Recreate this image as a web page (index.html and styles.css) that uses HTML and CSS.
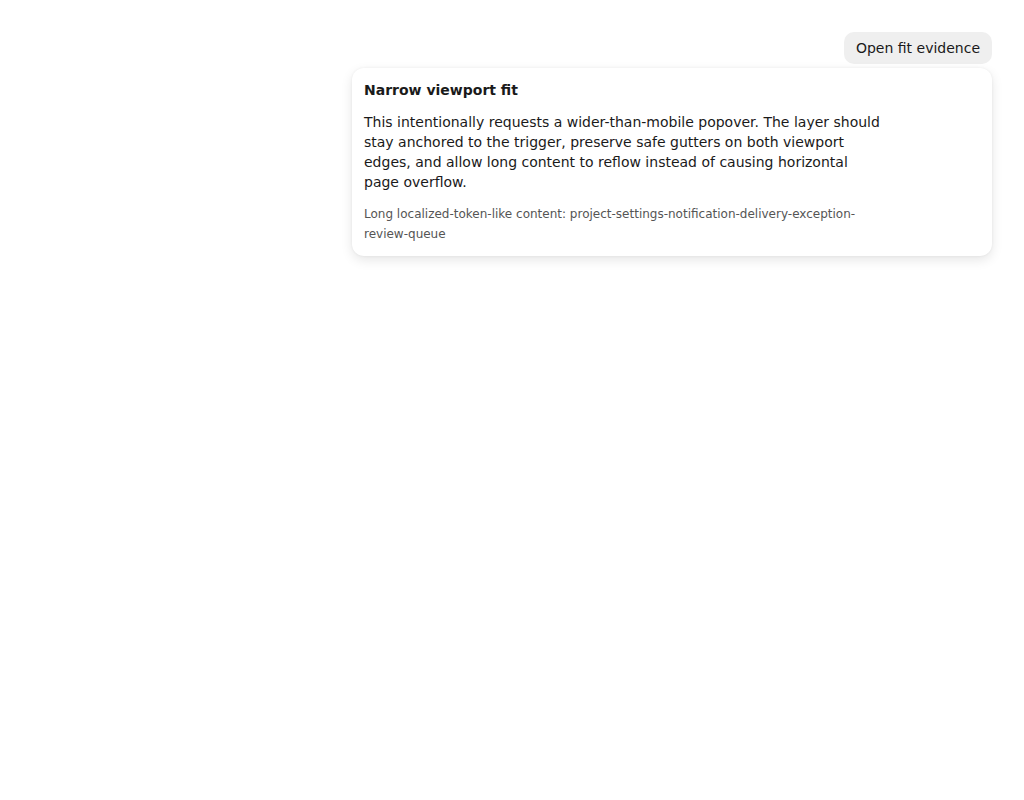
FILE: index.html
```html
<!DOCTYPE html>
<html lang="en">
<head>
<meta charset="utf-8">
<title>Narrow viewport fit</title>
<link rel="stylesheet" href="styles.css">
</head>
<body>
<div class="page">
  <button class="trigger" type="button">Open fit evidence</button>
  <div class="popover" role="dialog">
    <div class="content">
      <h2 class="title">Narrow viewport fit</h2>
      <p class="body">This intentionally requests a wider-than-mobile popover. The layer should stay anchored to the trigger, preserve safe gutters on both viewport edges, and allow long content to reflow instead of causing horizontal page overflow.</p>
      <p class="note">Long localized-token-like content: project-settings-notification-delivery-exception-review-queue</p>
    </div>
  </div>
</div>
</body>
</html>
```
FILE: styles.css
```css
html, body {
  margin: 0;
  padding: 0;
  background: #ffffff;
}
body {
  font-family: "DejaVu Sans", "Liberation Sans", sans-serif;
  color: #1a1a1a;
}
.page {
  padding: 32px;
  display: flex;
  flex-direction: column;
  align-items: flex-end;
  gap: 4px;
}
.trigger {
  height: 32px;
  padding: 0 12px;
  border: none;
  border-radius: 10px;
  background: #efefef;
  color: #1a1a1a;
  font-family: inherit;
  font-size: 14px;
  line-height: 20px;
  cursor: pointer;
}
.popover {
  width: 640px;
  box-sizing: border-box;
  padding: 12px;
  background: #ffffff;
  border-radius: 12px;
  box-shadow: 0 0 3px rgba(0,0,0,0.06), 0 4px 12px rgba(0,0,0,0.1);
}
.content {
  max-width: 520px;
  display: flex;
  flex-direction: column;
  gap: 12px;
}
.title {
  margin: 0;
  font-size: 14px;
  line-height: 20px;
  font-weight: bold;
  color: #1a1a1a;
}
.body {
  margin: 0;
  font-size: 14px;
  line-height: 20px;
  color: #1a1a1a;
}
.note {
  margin: 0;
  font-size: 12px;
  line-height: 20px;
  color: #555555;
  overflow-wrap: anywhere;
}
```
